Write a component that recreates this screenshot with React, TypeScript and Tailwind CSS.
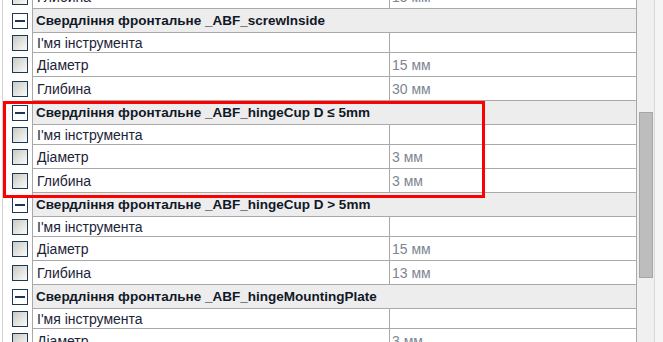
const groups = [
  { title: "Свердління фронтальне _ABF_screwInside", d: "15 мм", g: "30 мм" },
  { title: "Свердління фронтальне _ABF_hingeCup D ≤ 5mm", d: "3 мм", g: "3 мм" },
  { title: "Свердління фронтальне _ABF_hingeCup D > 5mm", d: "15 мм", g: "13 мм" },
  { title: "Свердління фронтальне _ABF_hingeMountingPlate", d: "3 мм", g: "3 мм" },
];

const Box = () => (
  <div className="w-[16px] h-[16px] border border-[#1d3756] bg-linear-to-br from-[#c9c9c4] via-[#e2e2de] to-[#fbfbfa]" />
);

const MinusBox = () => (
  <div className="w-[16px] h-[16px] border border-[#1d3756] bg-white flex items-center justify-center">
    <div className="w-[10px] h-[2px] bg-[#1d3756]" />
  </div>
);

const Row = ({ label, value, h }: { label: string; value: string; h: string }) => (
  <div className={`flex ${h}`}>
    <div className="w-[30px] border-r border-[#a9a9a9] flex items-center pl-[9px]">
      <Box />
    </div>
    <div className="w-[357px] border-r border-b border-[#a9a9a9] flex items-center pl-[4px] pt-[2px] text-[14px] text-[#1c2437]">
      {label}
    </div>
    <div className="w-[247px] border-r border-b border-[#a9a9a9] flex items-center pl-[2px] pt-[2px] text-[14px] text-[#7d8590]">
      {value}
    </div>
  </div>
);

const Header = ({ title }: { title: string }) => (
  <div className="flex h-[24px]">
    <div className="w-[30px] border-r border-[#a9a9a9] flex items-center pl-[9px]">
      <MinusBox />
    </div>
    <div className="w-[604px] bg-[#ededed] border-r border-b border-[#a9a9a9] flex items-center pl-[3px] pt-[2px] text-[13.5px] font-bold text-[#111827]">
      {title}
    </div>
  </div>
);

export default function App() {
  return (
    <div className="relative w-[663px] h-[342px] overflow-hidden bg-white flex font-['Liberation_Sans',Arial,sans-serif]">
      <div className="w-[637px] h-full overflow-hidden pl-[2px]">
        <div className="border-l border-[#d4d4d4] -mt-[15px]">
          <Row label="Глибина" value="15 мм" h="h-[24px]" />
          {groups.map((g) => (
            <div key={g.title}>
              <Header title={g.title} />
              <Row label="І'мя інструмента" value="" h="h-[20px]" />
              <Row label="Діаметр" value={g.d} h="h-[24px]" />
              <Row label="Глибина" value={g.g} h="h-[24px]" />
            </div>
          ))}
        </div>
      </div>
      <div className="w-[17px] h-full bg-[#f0f0f0] pl-[2px] pt-[112px]">
        <div className="w-[14px] h-[166px] bg-[#bdbdbd] border border-[#a6a6a6]" />
      </div>
      <div className="flex-1 h-full bg-[#f5f5f5] border-l border-[#d9d9d9]" />
      <div className="absolute left-[3px] top-[101px] w-[482px] h-[97px] border-[3px] border-[#ff0000]" />
    </div>
  );
}
